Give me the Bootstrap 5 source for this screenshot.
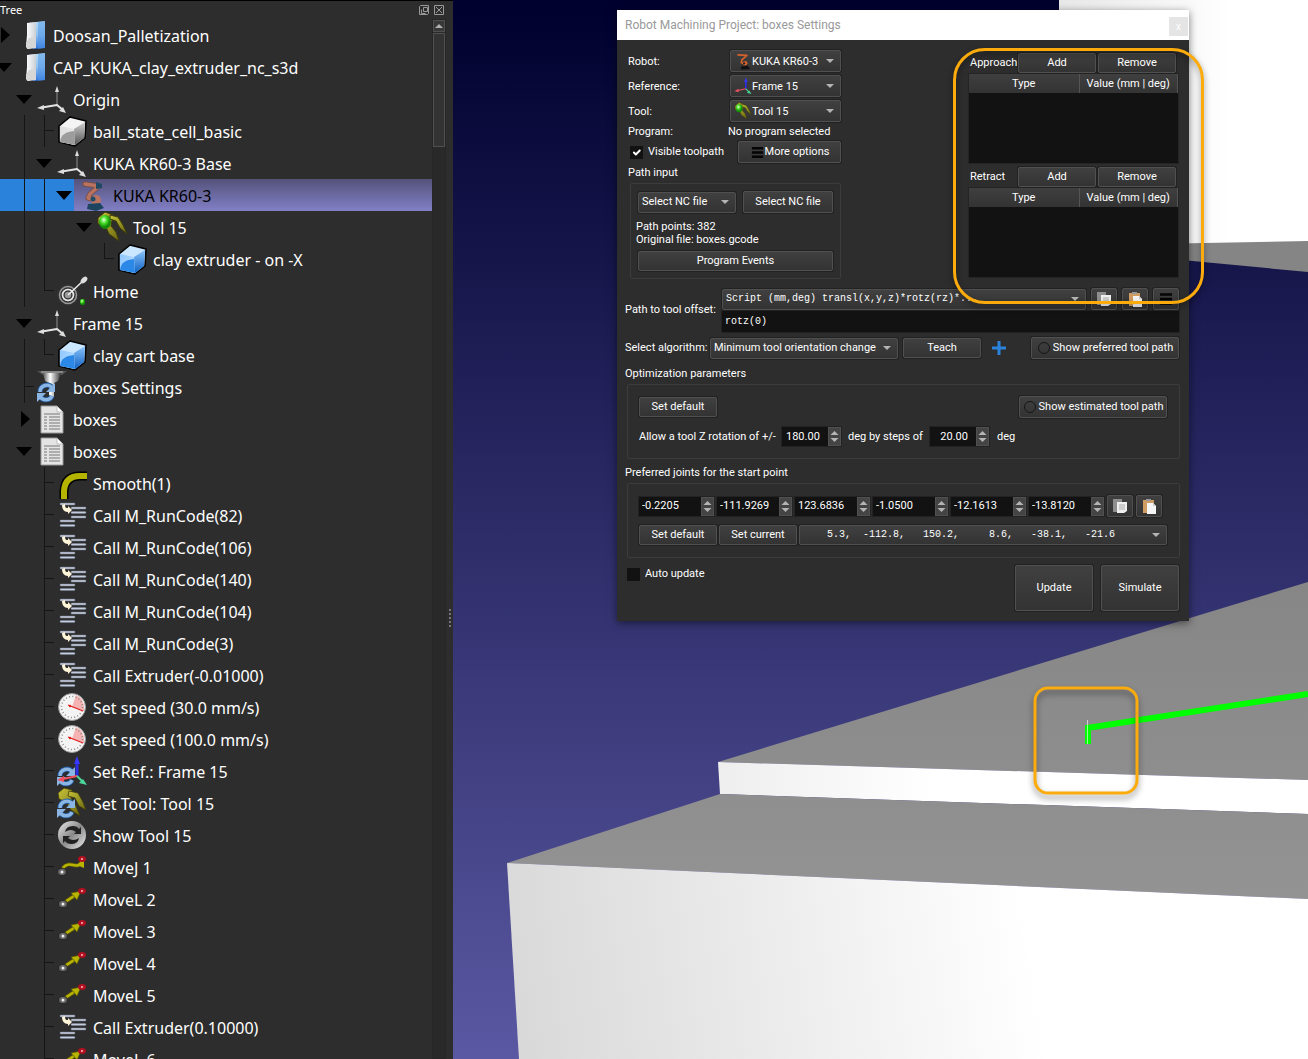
<!DOCTYPE html>
<html lang="en">
<head>
<meta charset="utf-8">
<meta name="viewport" content="width=device-width, initial-scale=1">
<title>Robot Machining Project</title>
<link href="https://cdn.jsdelivr.net/npm/bootstrap@5.3.0/dist/css/bootstrap.min.css" rel="stylesheet">
<style>
:root{--panel:#2d2d2d;--well:#121212;--edge:#505050}
body{background:var(--panel);color:#fff;font-family:"Noto Sans","Open Sans",sans-serif;font-size:16px}
/* project tree */
.tree-panel{flex:0 0 453px;background:var(--panel);border-top:1px solid #000}
.tree-head{height:18px;font-size:11px;line-height:18px}
.tree-body{min-height:0}
.tree-rows{min-width:0;overflow:hidden;margin-left:-6px}
.tree-rows li{height:32px;white-space:nowrap}
.tree-rows li>a{color:#fff;line-height:34px;padding-left:5px}
.tree-rows li>svg{width:32px;height:32px;flex:none;margin-left:2px}
.g{width:20px;flex:none;align-self:stretch;position:relative}
.v::before,.tee::before,.elbow::before{content:"";position:absolute;left:10px;top:0;bottom:0;border-left:1px solid #151515}
.elbow::before{bottom:16px}
.tee::after,.elbow::after{content:"";position:absolute;left:10px;top:15px;width:10px;border-top:1px solid #151515}
.open::before{content:"";position:absolute;left:2px;top:12px;border:8px solid transparent;border-top:9px solid #000;border-bottom:0}
.shut::before{content:"";position:absolute;left:7px;top:8px;border:8px solid transparent;border-left:9px solid #000;border-right:0}
.tree-rows li.picked{background:linear-gradient(#54527a,#8280c6)}
.tree-rows li.picked>a{color:#000}
.picked .g{background:#2a82da}
.tree-scroll{width:14px;border:1px solid #262626;background:#292929}
.tree-scroll .knob{height:114px;border:1px solid #505050;background:#333;margin:1px 0}
.tree-scroll .up{height:12px;border:1px solid #505050;background:#383838}
.up::before{content:"";display:block;width:8px;margin:3px auto 0;border:4px solid transparent;border-bottom-color:#b0b0b0;border-top:0}
.splitter{width:7px;padding-top:158px}
.splitter span{width:2px;height:18px;border-left:2px dotted #777}
/* 3D view */
.scene{overflow:hidden;background:linear-gradient(#00002e,#5a58a2)}
.scene>svg{display:block;width:100%;height:100%}
.mark-box{filter:drop-shadow(0 4px 3px rgba(0,0,0,.45))}
/* settings dialog */
.dlg{position:absolute;left:164px;top:10px;width:572px;background:var(--panel);font:11px/14px Roboto,"Noto Sans",sans-serif;box-shadow:0 2px 8px rgba(0,0,0,.5)}
.dlg-title{height:30px;background:#fff;color:#999;font-size:12px;padding-left:8px}
.dlg-close{width:19px;height:19px;background:#e5e5e5;color:#fff;border:0;font-size:10px;line-height:16px;padding:0;margin-top:3px;margin-right:1px}
.dlg-body{padding:10px 10px 10px 8px}
.dlg .btn,.dlg .form-select{font-size:11px;line-height:14px;color:#fff;background-color:#383838;border:1px solid var(--edge);border-radius:2px;box-shadow:0 0 0 1px #222;padding:0}
.dlg .btn{background-image:linear-gradient(#404040,#333);height:20px;width:78px;flex:none;white-space:nowrap}
.dlg .form-select{height:21px;min-height:0;padding:0 20px 0 3px;background-image:url("data:image/svg+xml,%3Csvg xmlns='http://www.w3.org/2000/svg' viewBox='0 0 8 4'%3E%3Cpath fill='%23b4b4b4' d='M0 0h8L4 4z'/%3E%3C/svg%3E"),linear-gradient(#404040,#333);background-size:8px 4px,100% 100%;background-position:right 6px center,0 0}
.dlg .tall{height:22px}
.dlg .form-control,.spin input{background:var(--well);color:#fff;border:0;border-radius:1px;font-size:11px;padding:0 0 0 3px;box-shadow:0 0 0 1px #222}
.dlg .code{font-family:"Liberation Mono",monospace;font-size:10px}
.dlg .form-control{height:21px;min-height:0;margin-top:1px}
.setup{width:213px;margin-left:3px}
.setup-row{margin-bottom:3px}
.setup-row label{padding-top:2px}
.prog{width:113px}
.pick{width:111px;position:relative;flex:none}
.pick svg{position:absolute;left:4px;top:2px;width:18px;height:18px}
.dlg .pick .form-select{padding-left:21px;padding-top:2px}
.box{border:1px solid #3c3c3c;border-radius:2px}
.path-box{width:211px;margin:3px 0 0 2px;padding:7px}
.dlg .nc-select{width:98px}
.dlg .nc-btn{width:90px}
.path-info{margin:7px 0 5px -2px;line-height:13px}
.wide-box{margin:3px -1px 0 2px;padding:11px 12px 12px 11px}
.moves{width:211px;padding-top:3px}
.moves .name{width:50px;flex:none;padding-left:2px}
.moves .btn+.btn{margin-left:2px}
.moves-well{background:var(--well);height:91px;margin:0 0 3px;border:1px solid #242424}
.moves-well th{font-weight:400;text-align:center;height:19px;line-height:18px;padding:0;background:linear-gradient(#3f3f3f,#333);border-right:1px solid #555;white-space:nowrap}
.moves-well th:first-child{width:110px}
.dlg .form-check-input{width:13px;height:13px;margin:0 5px 0 2px;border:0;border-radius:0;background-color:var(--well);flex:none}
.dlg .more{width:103px}
.dlg .show-path{width:148px}
.dlg .btn-icon{width:26px;height:22px}
.btn-icon svg{width:16px;height:16px;display:block;margin:auto}
.gap-5px{gap:5px}
.offset-label{width:97px;flex:none}
.algo-label{width:85px;flex:none}
.dlg .algo-select{width:188px}
.dlg .teach{margin:0 10px 0 5px}
.rot-label{width:143px}
.step-label{width:89px;padding-left:7px}
.mt-2px{margin-top:2px}
.mt-3px{margin-top:3px}
.mt-5px{margin-top:5px}
.mt-7px{margin-top:7px}
.mt-9px{margin-top:9px}
.spin{width:75px;height:19px;flex:none;box-shadow:0 0 0 1px #222}
.spin.short{width:59px}
.spin input{min-width:0;flex:1 1 0}
.spin svg{width:13px;height:19px;flex:none;background:#444;border:1px solid var(--edge)}
.joints{gap:3px}
.presets{gap:2px;margin-top:8px}
.dlg .presets .form-select{padding-left:27px;height:20px}
.dlg .big{width:78px;height:46px}
.callout{position:absolute;left:336px;top:38px;width:251px;height:256px;border:3px solid #fcab0c;border-radius:32px;filter:drop-shadow(0 3px 3px rgba(0,0,0,.45));pointer-events:none}
</style>
<script src="https://cdn.jsdelivr.net/npm/bootstrap@5.3.0/dist/js/bootstrap.bundle.min.js"></script>
</head>
<body class="vh-100 overflow-hidden d-flex">

<svg class="position-absolute" width="0" height="0" aria-hidden="true">
  <defs>
    <linearGradient id="fw"><stop stop-color="#fff"/><stop offset="1" stop-color="#ccd0d6"/></linearGradient>
    <linearGradient id="fb" x2="0" y2="1"><stop stop-color="#b9e0f8"/><stop offset=".5" stop-color="#8fc0f0"/><stop offset="1" stop-color="#2f74de"/></linearGradient>
    <linearGradient id="gf" x1="0" y1="0" x2="1" y2="1"><stop stop-color="#dcdcdc"/><stop offset="1" stop-color="#f0f0f0"/></linearGradient>
    <linearGradient id="bf" x1="0" y1="0" x2="1" y2="1"><stop stop-color="#8cc6ff"/><stop offset="1" stop-color="#c4e2ff"/></linearGradient>
    <linearGradient id="bs" x1="0" y1="0" x2="0" y2="1"><stop stop-color="#8cc4fa"/><stop offset="1" stop-color="#0f62c4"/></linearGradient>
    <linearGradient id="gs" x1="0" y1="0" x2="0" y2="1"><stop stop-color="#cfcfcf"/><stop offset="1" stop-color="#555"/></linearGradient>
    <radialGradient id="gr" cx=".4" cy=".35"><stop stop-color="#eaffdf"/><stop offset=".5" stop-color="#4ce02b"/><stop offset="1" stop-color="#138a08"/></radialGradient>
    <linearGradient id="metal" x2="1" y2="1"><stop stop-color="#eee"/><stop offset=".5" stop-color="#888"/><stop offset="1" stop-color="#eee"/></linearGradient>
    <linearGradient id="olive" x2="1" y2="1"><stop stop-color="#c8c43a"/><stop offset="1" stop-color="#6a6610"/></linearGradient>
    <linearGradient id="pipe" x2="1"><stop stop-color="#555"/><stop offset=".4" stop-color="#fff"/><stop offset="1" stop-color="#333"/></linearGradient>
  </defs>
  <symbol id="folder" viewBox="0 0 32 32"><path d="M12 4l17-2v27l-12 1z" fill="url(#fb)"/><path d="M22 3l7-1v27l-7 1z" fill="#4d94e4" opacity=".5"/><path d="M11 4l9-1v26l-8 1-2-2 1-12z" fill="url(#fw)"/><path d="M10 24l3-5 5-1 2 10-9 2z" fill="#d6d6d6"/></symbol>
  <symbol id="frame" viewBox="0 0 32 32"><g stroke-linecap="round"><path d="M21 22V8" stroke="#909090"/><path d="M21 22L6 24.500M21 22l6 5" stroke="#e4e4e4" stroke-width="2"/></g><path d="M21 3l2 6h-4zM1 25l7-3v5zM30 30l-7-2 4-4z" fill="#ddd"/></symbol>
  <symbol id="framec" viewBox="0 0 32 32"><path d="M21 21V7" stroke="#2b2be8" stroke-width="3"/><path d="M21 21L7 24" stroke="#f05060" stroke-width="2"/><path d="M21 21l6 6" stroke="#4ad79a" stroke-width="2"/><path d="M21 1l3 8h-6z" fill="#3838ff"/><path d="M1 25l7-4v6z" fill="#f05060"/><path d="M31 30l-8-2 4-4z" fill="#4ad79a"/></symbol>
  <symbol id="cubeg" viewBox="0 0 32 32"><path d="M3 11L14 2l16 4-1 17-10 8-16-4z" fill="#f4f4f4" stroke="#000" stroke-width="1.600" stroke-linejoin="round"/><path d="M4 11l14 3 1 16-15-3z" fill="url(#gf)"/><path d="M4 27c1-8 6-10 14-11l1 14z" fill="#9c9c9c"/><path d="M18 14l11-7-1 16-9 7z" fill="url(#gs)"/></symbol>
  <symbol id="cubeb" viewBox="0 0 32 32"><path d="M3 11L14 2l16 4-1 17-10 8-16-4z" fill="#cbe6ff" stroke="#000" stroke-width="1.600" stroke-linejoin="round"/><path d="M4 11l14 3 1 16-15-3z" fill="url(#bf)"/><path d="M4 27c1-8 6-10 14-11l1 14z" fill="#2b88e6"/><path d="M18 14l11-7-1 16-9 7z" fill="url(#bs)"/></symbol>
  <symbol id="robot" viewBox="0 0 32 32"><path d="M9 5l14 2-9 8-2 4 7 2" fill="none" stroke="#7b4a3c" stroke-width="5" stroke-linejoin="round" stroke-linecap="round"/><path d="M9 5l14 2-9 8-2 4 7 2" fill="none" stroke="#b87460" stroke-width="3.500" stroke-linejoin="round" stroke-linecap="round"/><path d="M20 3l6 2v4l-6 1z" fill="#204a63"/><circle cx="20" cy="21" r="5" fill="#b87460"/><circle cx="17" cy="20" r="2.500" fill="#234c66"/><path d="M12 25l12-1 4 5-8 3-9-2z" fill="#1e4560"/></symbol>
  <symbol id="robots" viewBox="0 0 32 32"><path d="M6 5l17 1-9 8-1 5 8 2" fill="none" stroke="#d4622c" stroke-width="3" stroke-linejoin="round"/><circle cx="20" cy="20" r="4" fill="#d4622c"/><circle cx="18" cy="20" r="2" fill="#222"/><path d="M12 26l12-2 5 6-16 1z" fill="#111"/></symbol>
  <symbol id="tool" viewBox="0 0 32 32"><path d="M2 7l7-6 8 3-2 11 5 6 3 9-10-7-4-9-7-1z" fill="url(#olive)" stroke="#3e3c08"/><path d="M14 4l8 2 5 8 4 9-7-6-4-7-6-2z" fill="url(#olive)" stroke="#3e3c08"/><ellipse cx="9" cy="11" rx="6" ry="7" fill="url(#gr)"/></symbol>
  <symbol id="home" viewBox="0 0 32 32"><circle cx="12" cy="20" r="10" fill="#999"/><g fill="none" stroke="#333" stroke-width="1.500"><circle cx="12" cy="20" r="10"/><circle cx="12" cy="20" r="7"/><circle cx="12" cy="20" r="4"/></g><circle cx="12" cy="20" r="5.500" fill="none" stroke="#e8e8e8" stroke-width="1.500"/><path d="M12 20L28 5" stroke="#eee" stroke-width="1.500"/><ellipse cx="28" cy="5" rx="4" ry="2.500" transform="rotate(-45 28 5)" fill="#ddd"/><rect x="24" y="24" width="5" height="6" rx="2" fill="url(#gr)"/></symbol>
  <symbol id="sync" viewBox="0 0 32 32"><g fill="none" stroke="#1e5aa0" stroke-width="5"><path d="M4 21c0-7 9-9 12-4M16 25c-2 5-10 5-12 0"/></g><g fill="none" stroke="#8bb5e2" stroke-width="3.400"><path d="M4 21c0-7 9-9 12-4M16 25c-2 5-10 5-12 0"/></g><path d="M19 12v9h-9zM1 31v-9h9z" fill="#8bb5e2"/></symbol>
  <symbol id="settings" viewBox="0 0 32 32"><path d="M1 0h30l-5 4H7z" fill="#555"/><path d="M7 2h18l-3 8-4 2v14h-5V12l-4-2z" fill="url(#pipe)"/><path d="M5 1h22" stroke="#bbb"/><use href="#sync"/></symbol>
  <symbol id="doc" viewBox="0 0 32 32"><path d="M5 3h16l6 6v21H5z" fill="#e4e4e4" stroke="#9a9a9a"/><path d="M21 3v6h6z" fill="#fff" stroke="#aaa" stroke-width=".7"/><path d="M8 11h16M8 14h3M13 14h11M8 17h3M13 17h11M8 20h3M13 20h11M8 23h3M13 23h11M8 26h3M13 26h11" stroke="#777" stroke-width="1.200"/></symbol>
  <symbol id="smooth" viewBox="0 0 32 32"><path d="M8 32v-8Q9 9 24 9h7" fill="none" stroke="#000" stroke-width="9"/><path d="M8 32v-8Q9 9 24 9h7" fill="none" stroke="#b4b400" stroke-width="6"/></symbol>
  <symbol id="call" viewBox="0 0 32 32"><g stroke="#6f7787" stroke-width="2.600" stroke-linecap="round"><path d="M5 5h13M16 9h13M16 13.500h13M16 18h13M5 22h13M5 26.500h13"/></g><g stroke="#c4ccdc" stroke-width="1.500" stroke-linecap="round"><path d="M5 5h13M16 9h13M16 13.500h13M16 18h13M5 22h13M5 26.500h13"/></g><path d="M6 6l3-1c0 4 1 4 3 4V7l4 4-4 4v-2c-4 0-6-3-6-7z" fill="#fff5d8"/></symbol>
  <symbol id="gauge" viewBox="0 0 32 32"><circle cx="16" cy="16" r="13.500" fill="#f4f4f4" stroke="#999"/><path d="M16 16L20 4q9 4 8 16z" fill="#f6b3b3"/><circle cx="16" cy="16" r="10.500" fill="none" stroke="#888" stroke-width="1.500" stroke-dasharray="1 2.300"/><path d="M12 14l15 6" stroke="#e02020" stroke-width="1.200"/><circle cx="14" cy="15" r="1.200" fill="#e02020"/></symbol>
  <symbol id="setref" viewBox="0 0 32 32"><use href="#sync"/><use href="#framec"/></symbol>
  <symbol id="settool" viewBox="0 0 32 32"><path d="M2 6l6-5 8 2-1 8 5 8 4 10-9-6-5-8-7-3z" fill="url(#olive)" stroke="#3e3c08" stroke-width=".8"/><path d="M13 4l9 2 5 9 3 8-7-4-4-8-7-2z" fill="url(#olive)" stroke="#3e3c08" stroke-width=".8"/><use href="#sync"/></symbol>
  <symbol id="show" viewBox="0 0 32 32"><circle cx="16" cy="16" r="14" fill="url(#metal)"/><path d="M9 13q1-6 8-6 4 0 6 3l2-2v7h-7l2-2q-5-4-11 0zM23 19q-1 6-8 6-4 0-6-3l-2 2v-7h7l-2 2q5 4 11 0z" fill="#222"/></symbol>
  <symbol id="movej" viewBox="0 0 32 32"><path d="M6 19q3-7 11-5t9-5" fill="none" stroke="#56540a" stroke-width="4"/><path d="M6 19q3-7 11-5t9-5" fill="none" stroke="#b8b400" stroke-width="2.600"/><path d="M28 17V9l-7 5z" fill="#b8b400"/><ellipse cx="26" cy="8" rx="4" ry="3" fill="#b01020"/><circle cx="26" cy="8" r="1" fill="#fbb"/><ellipse cx="6" cy="21" rx="4.500" ry="3.800" fill="#666" stroke="#222"/><circle cx="6" cy="21" r="1.500" fill="#eee"/></symbol>
  <symbol id="movel" viewBox="0 0 32 32"><path d="M9 19l12-8" stroke="#56540a" stroke-width="4"/><path d="M9 19l12-8" stroke="#b8b400" stroke-width="2.600"/><path d="M15 10l10-2-4 9z" fill="#b8b400" stroke="#56540a" stroke-width=".7"/><ellipse cx="26" cy="8" rx="4" ry="3" fill="#b01020"/><circle cx="26" cy="8" r="1" fill="#fbb"/><ellipse cx="7" cy="21" rx="4.500" ry="3.800" fill="#666" stroke="#222"/><circle cx="7" cy="21" r="1.500" fill="#eee"/></symbol>
  <symbol id="copy" viewBox="0 0 16 16"><path d="M1 1h9v13H1z" fill="#8e8e8e"/><path d="M5 4h10v9l-3 2H5z" fill="#efefef"/><path d="M7 7h6M7 9h6M7 11h6" stroke="#aaa"/></symbol>
  <symbol id="paste" viewBox="0 0 16 16"><path d="M2 2h11v13H2z" fill="#cf9c62"/><path d="M5 1h5v2H5z" fill="#999"/><path d="M6 5h6l3 3v8H6z" fill="#f5f5f5"/><path d="M12 5v3h3z" fill="#ccc"/></symbol>
  <symbol id="bars" viewBox="0 0 16 16"><path d="M2 3.500h12M2 8h12M2 12.500h12" stroke="#050505" stroke-width="2.600"/></symbol>
  <symbol id="arrows" viewBox="0 0 11 17"><path d="M1.500 7h8l-4-4zM1.500 10h8l-4 4z" fill="#b4b4b4"/></symbol>
</svg>

<aside class="tree-panel d-flex flex-column overflow-hidden">
  <header class="tree-head d-flex justify-content-between align-items-center">
    <span>Tree</span>
    <svg class="me-2" width="27" height="12" fill="none" stroke="#999"><path d="M2.500 1.500h8v8l-1 1h-8v-8zM5.500 3.500h4v4h-4zM3.500 5.500v4h4M16.500 1.500h9v9h-9zM18 3l6 6M24 3l-6 6"/></svg>
  </header>
  <div class="tree-body d-flex flex-grow-1">
    <ul class="tree-rows list-unstyled mb-0 flex-grow-1">
      <li class="d-flex"><span class="g shut"></span><svg><use href="#folder"/></svg><a class="text-decoration-none" href="#">Doosan_Palletization</a></li>
      <li class="d-flex"><span class="g open"></span><svg><use href="#folder"/></svg><a class="text-decoration-none" href="#">CAP_KUKA_clay_extruder_nc_s3d</a></li>
      <li class="d-flex"><span class="g"></span><span class="g open"></span><svg><use href="#frame"/></svg><a class="text-decoration-none" href="#">Origin</a></li>
      <li class="d-flex"><span class="g"></span><span class="g v"></span><span class="g tee"></span><svg><use href="#cubeg"/></svg><a class="text-decoration-none" href="#">ball_state_cell_basic</a></li>
      <li class="d-flex"><span class="g"></span><span class="g v"></span><span class="g open"></span><svg><use href="#frame"/></svg><a class="text-decoration-none" href="#">KUKA KR60-3 Base</a></li>
      <li class="d-flex picked"><span class="g"></span><span class="g v"></span><span class="g v"></span><span class="g open"></span><svg><use href="#robot"/></svg><a class="text-decoration-none" href="#">KUKA KR60-3</a></li>
      <li class="d-flex"><span class="g"></span><span class="g v"></span><span class="g v"></span><span class="g"></span><span class="g open"></span><svg><use href="#tool"/></svg><a class="text-decoration-none" href="#">Tool 15</a></li>
      <li class="d-flex"><span class="g"></span><span class="g v"></span><span class="g v"></span><span class="g"></span><span class="g"></span><span class="g elbow"></span><svg><use href="#cubeb"/></svg><a class="text-decoration-none" href="#">clay extruder - on -X</a></li>
      <li class="d-flex"><span class="g"></span><span class="g v"></span><span class="g elbow"></span><svg><use href="#home"/></svg><a class="text-decoration-none" href="#">Home</a></li>
      <li class="d-flex"><span class="g"></span><span class="g open"></span><svg><use href="#frame"/></svg><a class="text-decoration-none" href="#">Frame 15</a></li>
      <li class="d-flex"><span class="g"></span><span class="g v"></span><span class="g elbow"></span><svg><use href="#cubeb"/></svg><a class="text-decoration-none" href="#">clay cart base</a></li>
      <li class="d-flex"><span class="g"></span><span class="g tee"></span><svg><use href="#settings"/></svg><a class="text-decoration-none" href="#">boxes Settings</a></li>
      <li class="d-flex"><span class="g"></span><span class="g shut"></span><svg><use href="#doc"/></svg><a class="text-decoration-none" href="#">boxes</a></li>
      <li class="d-flex"><span class="g"></span><span class="g open"></span><svg><use href="#doc"/></svg><a class="text-decoration-none" href="#">boxes</a></li>
      <li class="d-flex"><span class="g"></span><span class="g"></span><span class="g tee"></span><svg><use href="#smooth"/></svg><a class="text-decoration-none" href="#">Smooth(1)</a></li>
      <li class="d-flex"><span class="g"></span><span class="g"></span><span class="g tee"></span><svg><use href="#call"/></svg><a class="text-decoration-none" href="#">Call M_RunCode(82)</a></li>
      <li class="d-flex"><span class="g"></span><span class="g"></span><span class="g tee"></span><svg><use href="#call"/></svg><a class="text-decoration-none" href="#">Call M_RunCode(106)</a></li>
      <li class="d-flex"><span class="g"></span><span class="g"></span><span class="g tee"></span><svg><use href="#call"/></svg><a class="text-decoration-none" href="#">Call M_RunCode(140)</a></li>
      <li class="d-flex"><span class="g"></span><span class="g"></span><span class="g tee"></span><svg><use href="#call"/></svg><a class="text-decoration-none" href="#">Call M_RunCode(104)</a></li>
      <li class="d-flex"><span class="g"></span><span class="g"></span><span class="g tee"></span><svg><use href="#call"/></svg><a class="text-decoration-none" href="#">Call M_RunCode(3)</a></li>
      <li class="d-flex"><span class="g"></span><span class="g"></span><span class="g tee"></span><svg><use href="#call"/></svg><a class="text-decoration-none" href="#">Call Extruder(-0.01000)</a></li>
      <li class="d-flex"><span class="g"></span><span class="g"></span><span class="g tee"></span><svg><use href="#gauge"/></svg><a class="text-decoration-none" href="#">Set speed (30.0 mm/s)</a></li>
      <li class="d-flex"><span class="g"></span><span class="g"></span><span class="g tee"></span><svg><use href="#gauge"/></svg><a class="text-decoration-none" href="#">Set speed (100.0 mm/s)</a></li>
      <li class="d-flex"><span class="g"></span><span class="g"></span><span class="g tee"></span><svg><use href="#setref"/></svg><a class="text-decoration-none" href="#">Set Ref.: Frame 15</a></li>
      <li class="d-flex"><span class="g"></span><span class="g"></span><span class="g tee"></span><svg><use href="#settool"/></svg><a class="text-decoration-none" href="#">Set Tool: Tool 15</a></li>
      <li class="d-flex"><span class="g"></span><span class="g"></span><span class="g tee"></span><svg><use href="#show"/></svg><a class="text-decoration-none" href="#">Show Tool 15</a></li>
      <li class="d-flex"><span class="g"></span><span class="g"></span><span class="g tee"></span><svg><use href="#movej"/></svg><a class="text-decoration-none" href="#">MoveJ 1</a></li>
      <li class="d-flex"><span class="g"></span><span class="g"></span><span class="g tee"></span><svg><use href="#movel"/></svg><a class="text-decoration-none" href="#">MoveL 2</a></li>
      <li class="d-flex"><span class="g"></span><span class="g"></span><span class="g tee"></span><svg><use href="#movel"/></svg><a class="text-decoration-none" href="#">MoveL 3</a></li>
      <li class="d-flex"><span class="g"></span><span class="g"></span><span class="g tee"></span><svg><use href="#movel"/></svg><a class="text-decoration-none" href="#">MoveL 4</a></li>
      <li class="d-flex"><span class="g"></span><span class="g"></span><span class="g tee"></span><svg><use href="#movel"/></svg><a class="text-decoration-none" href="#">MoveL 5</a></li>
      <li class="d-flex"><span class="g"></span><span class="g"></span><span class="g tee"></span><svg><use href="#call"/></svg><a class="text-decoration-none" href="#">Call Extruder(0.10000)</a></li>
      <li class="d-flex"><span class="g"></span><span class="g"></span><span class="g tee"></span><svg><use href="#movel"/></svg><a class="text-decoration-none" href="#">MoveL 6</a></li>
    </ul>
    <div class="tree-scroll flex-shrink-0"><div class="up"></div><div class="knob"></div></div>
    <div class="splitter flex-shrink-0 d-flex align-items-center justify-content-center"><span></span></div>
  </div>
</aside>

<main class="scene position-relative flex-grow-1">
  <svg viewBox="453 0 855 1059" preserveAspectRatio="xMinYMin slice" aria-label="3D view">
    <defs>
      <linearGradient id="front" gradientUnits="userSpaceOnUse" x1="510" y1="960" x2="1020" y2="880"><stop stop-color="#d9d9d9"/><stop offset=".5" stop-color="#ececec"/><stop offset="1" stop-color="#fff"/></linearGradient>
      <linearGradient id="step" gradientUnits="userSpaceOnUse" x1="718" y1="0" x2="930" y2="0"><stop stop-color="#eee"/><stop offset="1" stop-color="#fff"/></linearGradient>
      <linearGradient id="top" gradientUnits="userSpaceOnUse" x1="0" y1="582" x2="0" y2="900"><stop stop-color="#868686"/><stop offset="1" stop-color="#939393"/></linearGradient>
      <linearGradient id="wall" gradientUnits="userSpaceOnUse" x1="1059" y1="0" x2="1230" y2="0"><stop stop-color="#e8e8e8"/><stop offset="1" stop-color="#fff"/></linearGradient>
    </defs>
    <path d="M1059 0h249v242l-158 3h-91z" fill="url(#wall)"/>
    <path d="M1150 244l158-3v31l-158-15z" fill="#858585"/>
    <path d="M718 762L1308 582v198z" fill="url(#top)"/>
    <path d="M718 762l590 18v34L720 794z" fill="url(#step)"/>
    <path d="M720 794l588 20v85L507 863z" fill="url(#top)"/>
    <path d="M507 863l801 36v160H519z" fill="url(#front)"/>
    <path d="M1087 728l221-34" stroke="#0f0" stroke-width="6"/>
    <path d="M1088 725v19" stroke="#0f0" stroke-width="6"/>
    <path d="M1087.500 720v24" stroke="#fff" stroke-opacity=".6"/>
    <rect class="mark-box" x="1035" y="688" width="102" height="105" rx="13" fill="none" stroke="#fcab0c" stroke-width="3"/>
  </svg>

  <section class="dlg" aria-label="Settings">
    <header class="dlg-title d-flex justify-content-between align-items-center"><span>Robot Machining Project: boxes Settings</span><button class="dlg-close" type="button" aria-label="Close">x</button></header>
    <form class="dlg-body">
      <div class="d-flex justify-content-between">
        <div class="setup">
          <div class="setup-row d-flex justify-content-between align-items-center"><label for="robotSel">Robot:</label><div class="pick"><select id="robotSel" class="form-select tall"><option>KUKA KR60-3</option></select><svg><use href="#robots"/></svg></div></div>
          <div class="setup-row d-flex justify-content-between align-items-center"><label for="refSel">Reference:</label><div class="pick"><select id="refSel" class="form-select tall"><option>Frame 15</option></select><svg><use href="#framec"/></svg></div></div>
          <div class="setup-row d-flex justify-content-between align-items-center"><label for="toolSel">Tool:</label><div class="pick"><select id="toolSel" class="form-select tall"><option>Tool 15</option></select><svg><use href="#tool"/></svg></div></div>
          <div class="d-flex justify-content-between"><span>Program:</span><span class="prog">No program selected</span></div>
          <div class="d-flex align-items-center mt-2px"><input id="vis" class="form-check-input" type="checkbox" checked><label for="vis">Visible toolpath</label><button type="button" class="btn tall more ms-auto d-flex align-items-center justify-content-center"><svg width="15" height="15"><use href="#bars"/></svg>More options</button></div>
          <div class="mt-3px">Path input</div>
          <div class="box path-box">
            <div class="d-flex align-items-center justify-content-between"><select class="form-select nc-select" aria-label="File source"><option>Select NC file</option></select><button type="button" class="btn tall nc-btn">Select NC file</button></div>
            <div class="path-info">Path points: 382<br>Original file: boxes.gcode</div>
            <button type="button" class="btn d-block w-100">Program Events</button>
          </div>
        </div>
        <div class="moves">
          <div class="d-flex align-items-center"><span class="name">Approach</span><button type="button" class="btn">Add</button><button type="button" class="btn">Remove</button></div>
          <div class="moves-well"><table class="w-100"><thead><tr><th>Type</th><th>Value (mm | deg)</th></tr></thead></table></div>
          <div class="d-flex align-items-center"><span class="name">Retract</span><button type="button" class="btn">Add</button><button type="button" class="btn">Remove</button></div>
          <div class="moves-well"><table class="w-100"><thead><tr><th>Type</th><th>Value (mm | deg)</th></tr></thead></table></div>
        </div>
      </div>
      <div class="d-flex align-items-center mt-7px">
        <label for="offset" class="offset-label">Path to tool offset:</label>
        <div class="flex-grow-1">
          <div class="d-flex align-items-center gap-5px"><select class="form-select code" aria-label="Offset format"><option>Script (mm,deg) transl(x,y,z)*rotz(rz)*...</option></select><button type="button" class="btn btn-icon" aria-label="Copy"><svg><use href="#copy"/></svg></button><button type="button" class="btn btn-icon" aria-label="Paste"><svg><use href="#paste"/></svg></button><button type="button" class="btn btn-icon" aria-label="Menu"><svg><use href="#bars"/></svg></button></div>
          <input id="offset" class="form-control code" value="rotz(0)">
        </div>
      </div>
      <div class="d-flex align-items-center mt-5px">
        <label for="algo" class="algo-label">Select algorithm:</label>
        <select id="algo" class="form-select algo-select"><option>Minimum tool orientation change</option></select>
        <button type="button" class="btn teach">Teach</button>
        <svg width="16" height="16" aria-label="Add target"><path d="M8 1v14M1 8h14" stroke="#2a82da" stroke-width="3"/></svg>
        <button type="button" class="btn tall show-path ms-auto d-flex align-items-center justify-content-center"><svg width="16" height="14" fill="none" stroke="#151515"><circle cx="7" cy="7" r="5.500"/></svg>Show preferred tool path</button>
      </div>
      <div class="mt-2">Optimization parameters</div>
      <div class="box wide-box">
        <div class="d-flex align-items-center justify-content-between"><button type="button" class="btn">Set default</button><button type="button" class="btn tall show-path d-flex align-items-center justify-content-center"><svg width="16" height="14" fill="none" stroke="#151515"><circle cx="7" cy="7" r="5.500"/></svg>Show estimated tool path</button></div>
        <div class="d-flex align-items-center mt-9px"><label for="zrot" class="rot-label">Allow a tool Z rotation of +/-</label><div class="spin short d-flex"><input id="zrot" class="ps-1" value="180.00"><svg><use href="#arrows"/></svg></div><label for="zstep" class="step-label">deg by steps of</label><div class="spin short d-flex"><input id="zstep" class="text-end pe-2" value="20.00"><svg><use href="#arrows"/></svg></div><span class="ps-2">deg</span></div>
      </div>
      <div class="mt-7px">Preferred joints for the start point</div>
      <div class="box wide-box">
        <div class="d-flex align-items-center joints">
          <div class="spin d-flex"><input aria-label="Joint 1" value="-0.2205"><svg><use href="#arrows"/></svg></div>
          <div class="spin d-flex"><input aria-label="Joint 2" value="-111.9269"><svg><use href="#arrows"/></svg></div>
          <div class="spin d-flex"><input aria-label="Joint 3" value="123.6836"><svg><use href="#arrows"/></svg></div>
          <div class="spin d-flex"><input aria-label="Joint 4" value="-1.0500"><svg><use href="#arrows"/></svg></div>
          <div class="spin d-flex"><input aria-label="Joint 5" value="-12.1613"><svg><use href="#arrows"/></svg></div>
          <div class="spin d-flex"><input aria-label="Joint 6" value="-13.8120"><svg><use href="#arrows"/></svg></div>
          <button type="button" class="btn btn-icon" aria-label="Copy joints"><svg><use href="#copy"/></svg></button><button type="button" class="btn btn-icon" aria-label="Paste joints"><svg><use href="#paste"/></svg></button>
        </div>
        <div class="d-flex presets"><button type="button" class="btn">Set default</button><button type="button" class="btn">Set current</button><select class="form-select code" aria-label="Joint presets"><option>5.3,&nbsp; -112.8,&nbsp;&nbsp; 150.2,&nbsp;&nbsp;&nbsp;&nbsp; 8.6,&nbsp;&nbsp; -38.1,&nbsp;&nbsp; -21.6</option></select></div>
      </div>
      <div class="d-flex align-items-start mt-7px">
        <div class="d-flex align-items-center mt-2px"><input id="auto" class="form-check-input" type="checkbox"><label for="auto">Auto update</label></div>
        <button type="button" class="btn big ms-auto me-2">Update</button><button type="button" class="btn big">Simulate</button>
      </div>
    </form>
    <div class="callout"></div>
  </section>
</main>
</body>
</html>
